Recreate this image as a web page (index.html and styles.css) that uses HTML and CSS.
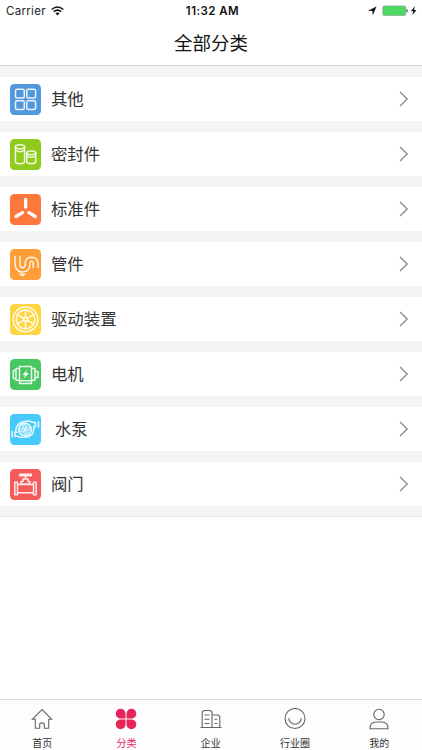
FILE: index.html
```html
<!DOCTYPE html>
<html lang="zh-CN">
<head>
<meta charset="utf-8">
<title>全部分类</title>
<link rel="stylesheet" href="styles.css">
</head>
<body>
<div class="app">
  <header class="header">
    <div class="status">
      <div class="status-left"><span class="carrier">Carrier</span>
        <svg class="wifi" width="13" height="10" viewBox="0 0 13 10" fill="none" stroke="#111" stroke-width="1.6"><path d="M.7 3.500Q6.500-1.500 12.300 3.500M2.800 5.700Q6.500 2.600 10.200 5.700"/><path d="M4.400 7.300Q6.500 5.700 8.600 7.300L6.500 9.500Z" fill="#111" stroke="none"/></svg>
      </div>
      <div class="time">11:32 AM</div>
      <div class="status-right">
        <svg width="50" height="12" viewBox="0 0 50 12"><path d="M0 5.700 8.500 1.500 4.800 10.200 4.300 6Z" fill="#111"/><rect x="14.800" y=".9" width="23" height="9.600" rx="1.500" fill="#4cd964" stroke="#8b9b8d" stroke-width=".6"/><path d="M38.800 4.200q1.500 1.500 0 3Z" fill="#444" stroke="#444" stroke-width=".5"/><path d="M47 1.300 42.800 6.300H45.200L44.200 10.200 48.500 5H46Z" fill="#111"/></svg>
      </div>
    </div>
    <h1 class="title">全部分类</h1>
  </header>

  <main class="list">
    <a class="row"><span class="icon blue"><svg viewBox="0 0 31 31"><rect x="5.500" y="5.300" width="8.800" height="8.800" rx="1.500"/><rect x="16.800" y="5.300" width="8.800" height="8.800" rx="1.500"/><rect x="5.500" y="16.800" width="8.800" height="8.800" rx="1.500"/><rect x="16.800" y="16.800" width="8.800" height="8.800" rx="1.500"/></svg></span><span class="name">其他</span><svg class="chevron" viewBox="0 0 10 16"><path d="M1 1 8.200 8 1 15"/></svg></a>
    <a class="row"><span class="icon green"><svg viewBox="0 0 31 31"><ellipse cx="10" cy="7.800" rx="4.600" ry="2.100"/><path d="M5.400 7.800V22.500Q5.400 24.700 10 24.700T14.600 22.500V7.800M5.400 11Q10 14.500 14.600 11"/><ellipse cx="21.200" cy="13.800" rx="4.500" ry="1.900"/><path d="M16.700 13.800V22.800Q16.700 24.700 21.200 24.700T25.700 22.800V13.800M16.700 16.800Q21.200 19.700 25.700 16.800"/></svg></span><span class="name">密封件</span><svg class="chevron" viewBox="0 0 10 16"><path d="M1 1 8.200 8 1 15"/></svg></a>
    <a class="row"><span class="icon vermilion"><svg viewBox="0 0 31 31"><path class="thick" d="M15.600 5.500V13M12.400 18.700 6 22.500M18.900 18.700 25.300 22.500"/></svg></span><span class="name">标准件</span><svg class="chevron" viewBox="0 0 10 16"><path d="M1 1 8.200 8 1 15"/></svg></a>
    <a class="row"><span class="icon orange"><svg viewBox="0 0 31 31"><path d="M5 7.500V14.500Q5.500 23 12.500 23Q19.600 22.500 19.800 16V14.200Q20 12.200 21.500 12.200Q23 12.200 23.200 14.200V18.500M10 7.500V16Q10.300 18.800 12.600 18.800Q15 18.800 15.200 16V13.500Q15.800 8.300 21.500 8.300Q27.500 8.500 28 14V18.500M9.800 25.300H14.800M11.500 26.500H13.200"/></svg></span><span class="name">管件</span><svg class="chevron" viewBox="0 0 10 16"><path d="M1 1 8.200 8 1 15"/></svg></a>
    <a class="row"><span class="icon yellow"><svg viewBox="0 0 31 31"><circle cx="15.500" cy="15.400" r="12.300"/><circle cx="15.500" cy="15.400" r="9.300"/><circle cx="15.500" cy="15.400" r="2"/><path d="M15.500 6V13.400M15.500 17.400V24.800M7.300 10.700 13.800 14.400M17.200 16.400 23.700 20.100M7.300 20.100 13.800 16.400M17.200 14.400 23.700 10.700"/></svg></span><span class="name">驱动装置</span><svg class="chevron" viewBox="0 0 10 16"><path d="M1 1 8.200 8 1 15"/></svg></a>
    <a class="row"><span class="icon emerald"><svg viewBox="0 0 31 31"><path d="M9.500 21.500V7.500H21.500V21.500M9.500 9.500H6V21.300H9.500M21.500 9.500H25V21.300H21.500M6 11.500H3.300V19.500H6M25 12.500H28V18.500H25M9.500 21.800H21.500V24.500H9.500Z"/><path class="solid" d="M17.500 10.500 12.300 16H15L13.500 19.500 19 14H16Z"/></svg></span><span class="name">电机</span><svg class="chevron" viewBox="0 0 10 16"><path d="M1 1 8.200 8 1 15"/></svg></a>
    <a class="row"><span class="icon cyan"><svg viewBox="0 0 31 31"><circle class="hub" cx="15" cy="15.500" r="6.300"/><path d="M5.500 18.200Q5.800 8 16 7.200H20.500Q22 8.800 25.500 8.400V12.500H23.800Q24.500 23 14.500 23.300H10Q8 21.800 5 22.500V18.300H7.500M28.500 7.800V13.200M2.200 17.500V23"/><path class="fine" d="M15 15.500Q11 13 14.500 10.200Q17 12 15 15.500Q17 11.500 20.200 14.500Q18.500 17.500 15 15.500Q19 18 15.500 20.800Q13 19 15 15.500Q13 19.500 9.800 16.500Q11.500 13.500 15 15.500"/></svg></span><span class="name indented">水泵</span><svg class="chevron" viewBox="0 0 10 16"><path d="M1 1 8.200 8 1 15"/></svg></a>
    <a class="row"><span class="icon red"><svg viewBox="0 0 31 31"><path d="M9.800 5.300H21.200V6.800H9.800ZM15.500 7.300V10M13 10H18V12.500H20V15H11V12.500H13ZM7.500 15.500H23.500V23.700H7.500ZM4.800 13.300H7.500V25.800H4.800ZM23.500 13.300H26.200V25.800H23.500Z"/></svg></span><span class="name">阀门</span><svg class="chevron" viewBox="0 0 10 16"><path d="M1 1 8.200 8 1 15"/></svg></a>
  </main>

  <nav class="tabs">
    <a class="tab"><svg viewBox="0 0 22 22"><path d="M1.300 11.300 11 1.500 20.700 11.300H17.700V20.300H13.300V15.800Q11 14 8.700 15.800V20.300H4.300V11.300Z"/></svg><span>首页</span></a>
    <a class="tab active"><svg viewBox="0 0 22 22"><path d="M10.500 10.500H5.800A4.900 4.900 0 1 1 10.500 5.700ZM11.500 10.500V5.700A4.900 4.900 0 1 1 16.200 10.500ZM10.500 11.500V16.300A4.900 4.900 0 1 1 5.800 11.500ZM11.500 11.500H16.200A4.900 4.900 0 1 1 11.500 16.300Z"/></svg><span>分类</span></a>
    <a class="tab"><svg viewBox="0 0 22 22"><path d="M.5 19.500H21.500M2.200 19.500V4L3.800 2.500H10.500L12 4V19.500M12 7H18.200L19.800 8.500V19.500M4.500 7H9.500M4.500 11.300H9.500M4.500 15.500H9.500M14.500 11.300H17.300M14.500 15.500H17.300"/></svg><span>企业</span></a>
    <a class="tab"><svg viewBox="0 0 22 22"><circle cx="11" cy="10.500" r="10"/><path d="M4.800 10A6.200 6.200 0 0 0 17.200 10"/></svg><span>行业圈</span></a>
    <a class="tab"><svg viewBox="0 0 22 22"><circle cx="11" cy="6.500" r="5.200"/><path d="M2 20.700Q2 14 8 14H14Q20 14 20 20.700Z"/></svg><span>我的</span></a>
  </nav>
</div>
</body>
</html>
```

FILE: styles.css
```css
* { box-sizing: border-box; }
body { margin: 0; background: #fff; font-family: "Noto Sans CJK SC", sans-serif; }
.app { width: 422px; height: 750px; display: flex; flex-direction: column; overflow: hidden; }
.header { height: 66px; flex: none; border-bottom: 1px solid #d4d4d4; }
.status { height: 22px; display: grid; grid-template-columns: 1fr auto 1fr; align-items: center; padding: 0 4px 0 6px; font: 11.500px/22px Inter, sans-serif; color: #222; }
.status-left { display: flex; align-items: center; gap: 5px; }
.carrier { letter-spacing: .3px; }
.time { font-weight: 600; font-size: 11.500px; letter-spacing: .45px; padding-left: 1px; color: #111; }
.status-right { display: flex; justify-content: flex-end; }
.title { margin: 0; height: 42px; line-height: 40px; text-align: center; font-size: 18.500px; font-weight: 400; color: #111; }
.list { display: flex; flex-direction: column; gap: 11px; padding: 11px 0; background: #f4f4f4; border-bottom: 1px solid #e8e8e8; height: 451px; }
.row { height: 44px; flex: none; display: flex; align-items: center; background: #fff; padding: 0 13px 0 10.400px; }
.icon { width: 31px; height: 31px; border-radius: 4.500px; flex: none; }
.icon svg { display: block; width: 31px; height: 31px; fill: none; stroke: #fff; stroke-opacity: .88; stroke-width: 1.500; stroke-linecap: round; stroke-linejoin: round; }
.icon .thick { stroke-width: 3.300; stroke-opacity: 1; }
.icon .solid { fill: #fff; stroke: none; }
.icon .fine { stroke-width: .9; }
.icon .hub { fill: rgba(255, 255, 255, .3); }
.blue { background: #5298dc; }
.green { background: #8ecb1c; }
.vermilion { background: #ff783b; }
.orange { background: #ff9d37; }
.yellow { background: #ffd541; }
.emerald { background: #48c660; }
.cyan { background: #45cafa; }
.red { background: #f55c59; }
.name { flex: 1; margin-left: 9.600px; padding-bottom: 2px; font-size: 16.400px; line-height: 24px; color: #333; }
.indented { padding-left: 4px; }
.chevron { width: 10px; height: 16px; fill: none; stroke: #8e8e8e; stroke-width: 1.400; }
.tabs { margin-top: auto; height: 51px; flex: none; display: flex; border-top: 1px solid #dcdcdc; background: #fdfdfd; padding-right: .5px; }
.tab { flex: 1; display: flex; flex-direction: column; align-items: center; padding-top: 8px; font-size: 10px; line-height: 14px; color: #333; }
.tab svg { width: 22px; height: 22px; flex: none; fill: none; stroke: #666; stroke-width: 1.100; }
.tab span { margin-top: 6px; }
.tab.active { color: #e52459; }
.tab.active svg { fill: #e52459; stroke: none; }
```
